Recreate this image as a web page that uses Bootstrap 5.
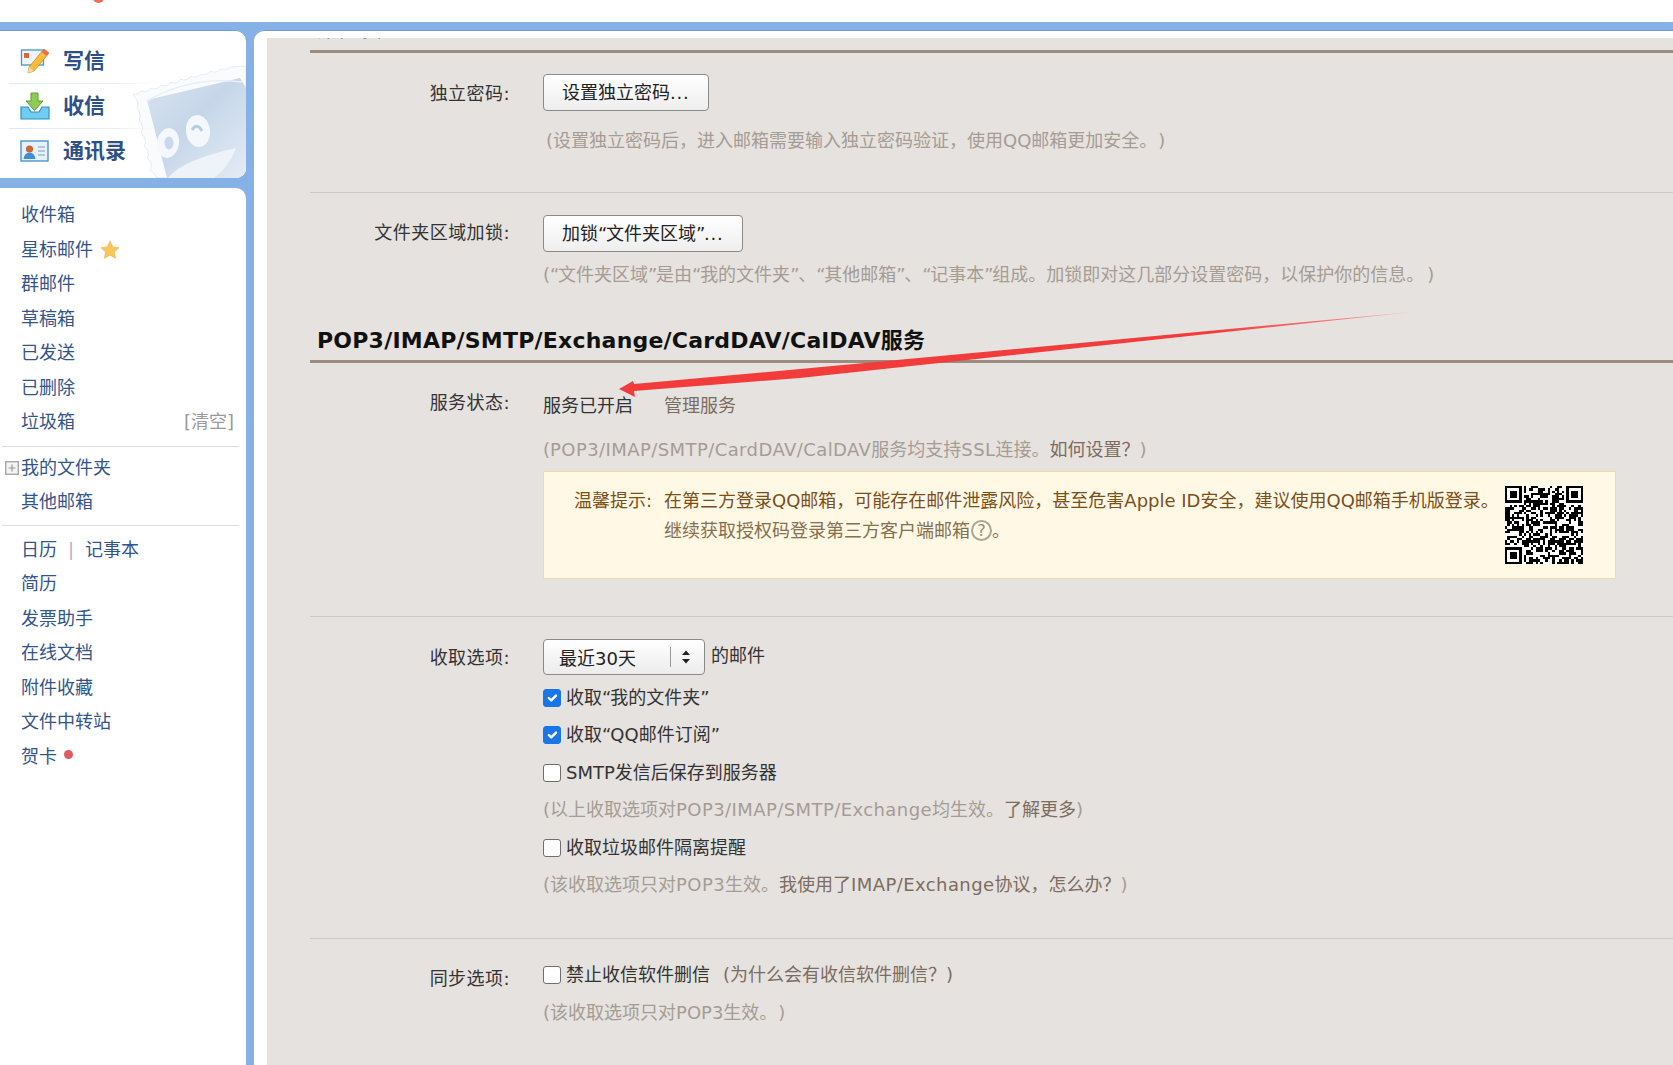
<!DOCTYPE html>
<html lang="zh-CN">
<head>
<meta charset="utf-8">
<title>设置</title>
<link rel="stylesheet" href="https://cdn.jsdelivr.net/npm/bootstrap@5.3.0/dist/css/bootstrap.min.css">
<style>
html,body{height:1065px;overflow:hidden}
body{position:relative;background:#fff;font-family:"DejaVu Sans","Noto Sans CJK SC",sans-serif;font-size:18px;line-height:24px;color:#333}
.topstrip{height:22px;position:relative;overflow:hidden}
.topdot{position:absolute;left:93px;top:-7px;width:11px;height:10px;border-radius:50%;background:#ef6a5a}
.frame{height:1043px;background:#85b1e6;border-top:8px solid #85b1e6;display:flex}
.sidecol{width:246px;flex:none;display:flex;flex-direction:column;gap:10px}
.quickbox{height:148px;background:#fff;border-radius:0 10px 10px 0;position:relative;overflow:hidden;padding-top:9px;box-shadow:inset 0 1px 0 #6f9bd2}
.stamp{position:absolute;left:130px;top:30px;width:116px;height:118px}
.quickitem{position:relative;display:flex;align-items:center;height:44px;padding-left:20px;font-size:21px;font-weight:700;color:#2f4f87}
.quickitem+.quickitem{margin-top:1px}
.quickitem:not(:last-child)::after{content:"";position:absolute;left:9px;width:150px;bottom:-1px;height:1px;background:linear-gradient(90deg,#dfe8f4,#e8eff8 70%,transparent)}
.quickitem svg{width:30px;height:28px;margin-right:13px;flex:none}
.folderbox{flex:1;background:#fff;border-radius:0 10px 0 0;padding-top:10px;color:#34558c}
.folderlist{margin:0;padding:0;list-style:none}
.folderlist li{display:flex;align-items:center;height:34.5px;padding:0 12px 0 21px;position:relative}
.folderlist .mt-a{margin-top:4px}
.folderlist .mt-b{margin-top:7px}
.folderrule{margin:6px 7px 0 2px;border:0;border-top:1px solid #d9dde2;opacity:1}
.folderrule.r2{margin-top:5px}
.emptylink{margin-left:auto;color:#9a9a9a}
.plusbox{position:absolute;left:5px;top:10px;width:14px;height:14px}
.sep{color:#a9b4c4;margin:0 11px}
.reddot{width:9px;height:9px;border-radius:50%;background:#de5a5e;margin-left:7px;margin-top:-4px}
.staricon{margin-left:7px}
.mainwrap{flex:1;margin-left:8px;background:#fff;border-radius:10px 0 0 0;padding:8px 0 0 13px;min-width:0;box-shadow:inset 0 1px 0 #6f9bd2}
.graypane{height:100%;background:#e6e2df;padding-left:43px;overflow:hidden}
.headclip{height:12px;overflow:hidden;position:relative}
.headclip span{position:absolute;left:7px;top:-24px;width:63px;overflow:hidden;white-space:nowrap;font-size:22px;font-weight:700;color:#555;line-height:30px}
.secrule{height:3px;background:#9b8b80}
.setrow{display:flex;border-bottom:1px solid #cdc9c6}
.setrow.noline{border-bottom:0}
.setlabel{width:233px;flex:none;text-align:right;padding-right:33px;color:#333;letter-spacing:.45px}
.setbody{flex:1;min-width:0}
.hinttext{color:#a59c94}
.lat{letter-spacing:.42px}
.q{letter-spacing:-1.3px}
.q1{letter-spacing:-1px}
.dots{letter-spacing:.8px}
.r1{padding-top:21px;height:140px}.r1 .setlabel{padding-top:8px}
.r1 .hinttext{margin-top:18px;padding-left:3px}
.r2x{padding-top:22px;height:94px}.r2x .setlabel{padding-top:6px}
.r2x .hinttext{margin-top:11px}
.settingbtn{height:37px;padding:0 18px;font-size:18px;line-height:35px;color:#222;background:linear-gradient(#fff,#eeeeee);border:1px solid #8c8a88;border-radius:4px;--bs-btn-hover-bg:#fff}
.sechead{margin:39px 0 0;padding:0 0 4px 7px;font-size:22px;line-height:30px;font-weight:700;color:#111;border-bottom:3px solid #9b8b80;letter-spacing:.22px}
.r3{padding-top:28px;height:254px}
.r3 .statusline{padding-top:3px;display:flex}
.mgr{color:#7d6c60}
.statusline .mgr{margin-left:31px}
.r3 .hinttext{margin-top:20px}
.tipbox{margin:9px 0 0;padding:0;width:1073px;height:108px;background:#fff8e5;border:1px solid #ecdca8;border-radius:0;color:#7a4f1a;display:flex;position:relative}
.tiphead{width:120px;flex:none;padding:14px 0 0 30px;line-height:30px;white-space:nowrap}
.tipmain{padding-top:14px;line-height:30px;white-space:nowrap}
.tipmain .t2{color:#85704f}
.helpicon{display:inline-block;width:21px;height:21px;border:2px solid #aaa596;border-radius:50%;text-align:center;font-size:16px;line-height:17px;color:#8f8a7c;vertical-align:1px;margin-left:1px}
.qrpic{position:absolute;left:961px;top:14px;width:78px;height:78px;background:#fff}
.r4{padding-top:22px;height:322px}.r4 .setlabel{padding-top:7px}
.selectline{display:flex;height:36px}
.mailselect{width:162px;height:36px;padding:3px 0 0 15px;font-size:18px;line-height:31px;color:#222;border:1px solid #8c8a88;border-radius:4px;background-color:#f4f4f4;background-image:url("data:image/svg+xml,%3Csvg xmlns='http://www.w3.org/2000/svg' width='34' height='34'%3E%3Cpath d='M.5 7v20' stroke='%23999'/%3E%3Cpath d='M12 15l4-4.500 4 4.500zM12 19l4 4.500 4-4.500z' fill='%23222'/%3E%3C/svg%3E"),linear-gradient(#fff,#ececec);background-repeat:no-repeat;background-position:right 0 center,0 0;background-size:34px 34px,auto}
.afterselect{margin-left:6px;padding-top:2px;line-height:30px;color:#333}
.optline{height:37.5px;display:flex;align-items:center;color:#333}
.optline.hinttext{color:#a59c94}
.optline .form-check-input{width:18px;height:18px;margin:0 5px 0 0;flex:none;border:1.5px solid #6e6e6e;border-radius:3px;background-color:#fff}
.optline .form-check-input:checked{background-color:#1976e8;border-color:#1976e8}
.optfirst{margin-top:4px}
.r5{padding-top:17px}.r5 .setlabel{padding-top:11px}
.r5 .hinttext{margin-top:1px}
.whylink{margin-left:13px;color:#7d6c60}
.pa{margin-left:10px}
.pb{margin-left:12px}
.pc{margin-left:10px}
.arrowlayer{position:absolute;left:0;top:0;width:1673px;height:1065px;pointer-events:none}
</style>
</head>
<body>
<div class="topstrip"><span class="topdot"></span></div>
<div class="frame">
  <aside class="sidecol">
    <div class="quickbox">
      <svg class="stamp" viewBox="0 0 116 118">
        <defs><linearGradient id="sg" x1="0" y1="0" x2="1" y2="1"><stop offset="0" stop-color="#d7e2f0"/><stop offset=".45" stop-color="#c6d6e9"/><stop offset="1" stop-color="#e4ecf5"/></linearGradient></defs>
        <g transform="translate(0 8)">
        <path d="M3 27 Q8 26 12 23 Q16 26 21 20 Q26 23 31 17 Q36 20 41 14 Q46 17 51 11 Q56 14 61 8 Q66 11 71 6 Q76 8 81 3 Q86 6 91 1 Q96 3 101 -1 L116 -2 L116 110 L27 110 Q24 104 20 102 Q24 96 17 90 Q21 84 14 78 Q18 72 11 65 Q15 59 9 52 Q12 46 7 40 Q10 34 3 27Z" fill="#f9fbfd" stroke="#e4ebf4"/>
        <path d="M17 32 L110 10 L116 20 L116 110 L37 110Z" fill="url(#sg)"/>
        <path d="M17 33 Q60 8 112 14" fill="none" stroke="#e8eff8" stroke-width="1.500"/>
        <ellipse cx="38" cy="75" rx="11" ry="15" transform="rotate(8 38 75)" fill="#f4f7fb"/>
        <ellipse cx="39" cy="75" rx="4.500" ry="6.500" fill="#c9d8ea"/>
        <ellipse cx="68" cy="63" rx="12" ry="16" transform="rotate(-8 68 63)" fill="#f4f7fb"/>
        <path d="M62 62 Q67 54 72 63" fill="none" stroke="#b8cbe0" stroke-width="3"/>
        <path d="M38 110 Q52 92 106 80 Q100 98 84 110Z" fill="#eef3f9"/>
        </g>
      </svg>
      <div class="quickitem">
        <svg viewBox="0 0 30 28"><rect x="1.500" y="3" width="22" height="15" fill="#eef6fb" stroke="#3f9bc4" stroke-width="1.300"/><rect x="4" y="6" width="5" height="5" fill="#e0633a"/><path d="M24 2l5 4-15 18-6 2 1-6z" fill="#f6bd3a" stroke="#c98a20" stroke-width=".8"/><path d="M24 2l5 4-2.500 3-5-4z" fill="#e8704e"/><path d="M9 20l-1 6 6-2z" fill="#f2dcb6"/></svg>写信
      </div>
      <div class="quickitem">
        <svg viewBox="0 0 30 28"><path d="M11 1h7v8h5l-8.500 9.500L6 9h5z" fill="#8ecb55" stroke="#5d9e33"/><path d="M1 15h7l3 5h8l3-5h7v12H1z" fill="#6fcdef" stroke="#2f8fc4" stroke-width="1.200"/></svg>收信
      </div>
      <div class="quickitem">
        <svg viewBox="0 0 30 28"><rect x="1" y="4" width="27" height="20" fill="#e6f1fa" stroke="#3f8fc9" stroke-width="1.300"/><circle cx="9.500" cy="12" r="3.600" fill="#c9683a"/><path d="M3.500 22q1-6.500 6-6.500t6 6.500z" fill="#3f8fd2"/><path d="M18 10h7M18 14h7M18 18h7" stroke="#9dbcd8" stroke-width="1.300"/></svg>通讯录
      </div>
    </div>
    <div class="folderbox">
      <ul class="folderlist">
        <li>收件箱</li>
        <li>星标邮件<svg width="20" height="20" viewBox="0 0 20 20" class="staricon"><path d="M10 1l2.800 5.900 6.200.8-4.600 4.300 1.200 6.300L10 15.200 4.400 18.300l1.200-6.300L1 7.700l6.200-.8z" fill="#f6c75a" stroke="#e9b444" stroke-width=".6"/></svg></li>
        <li>群邮件</li>
        <li>草稿箱</li>
        <li>已发送</li>
        <li>已删除</li>
        <li>垃圾箱<span class="emptylink">[清空]</span></li>
      </ul>
      <hr class="folderrule">
      <ul class="folderlist">
        <li class="mt-a"><svg class="plusbox" viewBox="0 0 14 14"><rect x=".7" y=".7" width="12.600" height="12.600" fill="#f4f4f4" stroke="#a8a8a8" stroke-width="1.400"/><path d="M3.500 7h7M7 3.500v7" stroke="#999" stroke-width="1.200"/></svg>我的文件夹</li>
        <li>其他邮箱</li>
      </ul>
      <hr class="folderrule r2">
      <ul class="folderlist">
        <li class="mt-b">日历<span class="sep">|</span>记事本</li>
        <li>简历</li>
        <li>发票助手</li>
        <li>在线文档</li>
        <li>附件收藏</li>
        <li>文件中转站</li>
        <li>贺卡<span class="reddot"></span></li>
      </ul>
    </div>
  </aside>
  <main class="mainwrap">
    <div class="graypane">
      <div class="headclip"><span>账户安全</span></div>
      <div class="secrule"></div>
      <div class="setrow r1">
        <div class="setlabel">独立密码:</div>
        <div class="setbody">
          <button type="button" class="btn settingbtn">设置独立密码<span class="dots">...</span></button>
          <div class="hinttext">(设置独立密码后，进入邮箱需要输入独立密码验证，使用QQ邮箱更加安全。<span class="pa">)</span></div>
        </div>
      </div>
      <div class="setrow r2x noline">
        <div class="setlabel">文件夹区域加锁:</div>
        <div class="setbody">
          <button type="button" class="btn settingbtn">加锁<span class="q">“</span>文件夹区域<span class="q">”</span><span class="dots">...</span></button>
          <div class="hinttext">(<span class="q">“</span>文件夹区域<span class="q">”</span>是由<span class="q">“</span>我的文件夹<span class="q">”</span>、<span class="q">“</span>其他邮箱<span class="q">”</span>、<span class="q">“</span>记事本<span class="q">”</span>组成。加锁即对这几部分设置密码，以保护你的信息。<span class="pb">)</span></div>
        </div>
      </div>
      <h2 class="sechead">POP3/IMAP/SMTP/Exchange/CardDAV/CalDAV服务</h2>
      <div class="setrow r3">
        <div class="setlabel">服务状态:</div>
        <div class="setbody">
          <div class="statusline"><span>服务已开启</span><span class="mgr">管理服务</span></div>
          <div class="hinttext">(<span class="lat">POP3/IMAP/SMTP/CardDAV/CalDAV</span>服务均支持<span class="lat">SSL</span>连接。<span class="mgr">如何设置？</span>)</div>
          <div class="alert tipbox" role="alert">
            <div class="tiphead">温馨提示:</div>
            <div class="tipmain">在第三方登录QQ邮箱，可能存在邮件泄露风险，甚至危害Apple ID安全，建议使用QQ邮箱手机版登录。<br><span class="t2">继续获取授权码登录第三方客户端邮箱<span class="helpicon">?</span>。</span></div>
            <svg class="qrpic" id="qr" viewBox="0 0 33 33" shape-rendering="crispEdges"></svg>
          </div>
        </div>
      </div>
      <div class="setrow r4">
        <div class="setlabel">收取选项:</div>
        <div class="setbody">
          <div class="selectline"><select class="form-select mailselect"><option>最近30天</option></select><span class="afterselect">的邮件</span></div>
          <div class="optline optfirst"><input class="form-check-input" type="checkbox" checked><span>收取<span class="q1">“</span>我的文件夹<span class="q1">”</span></span></div>
          <div class="optline"><input class="form-check-input" type="checkbox" checked><span>收取<span class="q1">“</span>QQ邮件订阅<span class="q1">”</span></span></div>
          <div class="optline"><input class="form-check-input" type="checkbox"><span>SMTP发信后保存到服务器</span></div>
          <div class="optline hinttext"><span>(以上收取选项对<span class="lat">POP3/IMAP/SMTP/Exchange</span>均生效。<span class="mgr">了解更多</span>)</span></div>
          <div class="optline"><input class="form-check-input" type="checkbox"><span>收取垃圾邮件隔离提醒</span></div>
          <div class="optline hinttext"><span>(该收取选项只对<span class="lat">POP3</span>生效。<span class="mgr">我使用了<span class="lat">IMAP/Exchange</span>协议，怎么办？</span>)</span></div>
        </div>
      </div>
      <div class="setrow r5 noline">
        <div class="setlabel">同步选项:</div>
        <div class="setbody">
          <div class="optline"><input class="form-check-input" type="checkbox"><span>禁止收信软件删信</span><span class="whylink">(为什么会有收信软件删信？)</span></div>
          <div class="optline hinttext"><span>(该收取选项只对POP3生效。<span class="pc">)</span></span></div>
        </div>
      </div>
    </div>
  </main>
</div>
<svg class="arrowlayer" viewBox="0 0 1673 1065">
  <defs><linearGradient id="ag" gradientUnits="userSpaceOnUse" x1="619" y1="389" x2="1412" y2="312"><stop offset="0" stop-color="#f23c3c"/><stop offset=".75" stop-color="#f23c3c"/><stop offset="1" stop-color="#f7a0a0"/></linearGradient></defs>
  <path d="M1412 312L800 369L634 384L633 381L619 389L635 397L634 391L800 378Z" fill="url(#ag)"/>
</svg>
<script src="https://cdn.jsdelivr.net/npm/bootstrap@5.3.0/dist/js/bootstrap.bundle.min.js"></script>
<script>
(function(){
  var n=33,s=7,out='';
  function finder(x,y){return '<path d="M'+x+' '+y+'h7v7h-7zM'+(x+1)+' '+(y+1)+'v5h5v-5z" fill-rule="evenodd"/><rect x="'+(x+2)+'" y="'+(y+2)+'" width="3" height="3"/>';}
  for(var y=0;y<n;y++)for(var x=0;x<n;x++){
    s=(s*1103515245+12345)&2147483647;
    var inF=(x<8&&y<8)||(x>24&&y<8)||(x<8&&y>24);
    if(!inF&&((s>>16)%100)<56)out+='<rect x="'+x+'" y="'+y+'" width="1" height="1"/>';
  }
  document.getElementById('qr').innerHTML=out+finder(0,0)+finder(26,0)+finder(0,26);
})();
</script>
</body>
</html>
